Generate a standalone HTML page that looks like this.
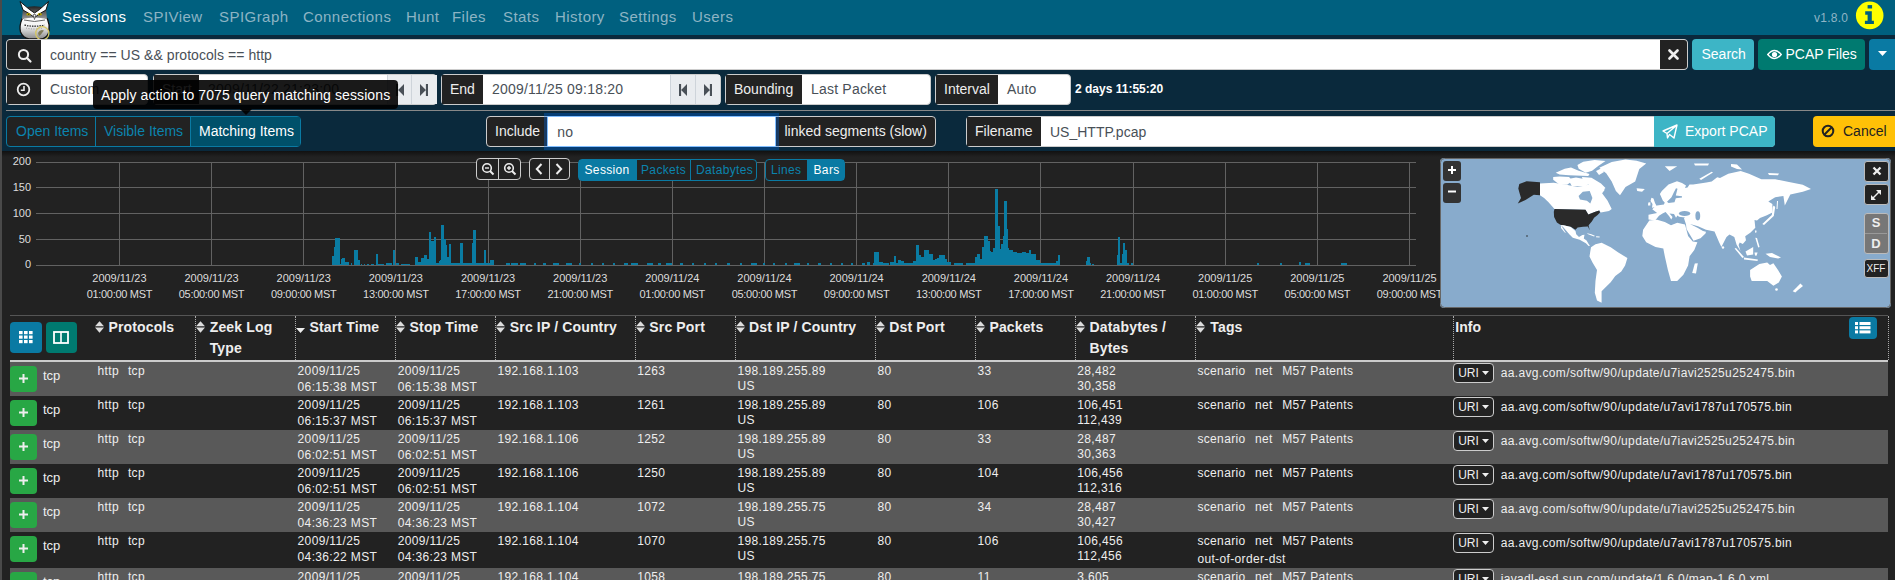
<!DOCTYPE html>
<html><head><meta charset="utf-8">
<style>
*{box-sizing:border-box}
html,body{margin:0;padding:0}
body{width:1895px;height:580px;overflow:hidden;position:relative;background:#222;font-family:"Liberation Sans",sans-serif;color:#eee}
.a{position:absolute}
.t{white-space:nowrap}
</style></head><body>
<div class="a" style="left:0px;top:0px;width:1895px;height:35px;background:#00607f;"></div>
<div class="a" style="left:0px;top:35px;width:1895px;height:116px;background:#0a293c;"></div>
<div class="a t" style="left:62px;top:9.30px;font-size:15px;line-height:15px;color:#fff;letter-spacing:0.45px;">Sessions</div>
<div class="a t" style="left:143px;top:9.30px;font-size:15px;line-height:15px;color:#8db4c4;letter-spacing:0.45px;">SPIView</div>
<div class="a t" style="left:219px;top:9.30px;font-size:15px;line-height:15px;color:#8db4c4;letter-spacing:0.45px;">SPIGraph</div>
<div class="a t" style="left:303px;top:9.30px;font-size:15px;line-height:15px;color:#8db4c4;letter-spacing:0.45px;">Connections</div>
<div class="a t" style="left:406px;top:9.30px;font-size:15px;line-height:15px;color:#8db4c4;letter-spacing:0.45px;">Hunt</div>
<div class="a t" style="left:452px;top:9.30px;font-size:15px;line-height:15px;color:#8db4c4;letter-spacing:0.45px;">Files</div>
<div class="a t" style="left:503px;top:9.30px;font-size:15px;line-height:15px;color:#8db4c4;letter-spacing:0.45px;">Stats</div>
<div class="a t" style="left:555px;top:9.30px;font-size:15px;line-height:15px;color:#8db4c4;letter-spacing:0.45px;">History</div>
<div class="a t" style="left:619px;top:9.30px;font-size:15px;line-height:15px;color:#8db4c4;letter-spacing:0.45px;">Settings</div>
<div class="a t" style="left:692px;top:9.30px;font-size:15px;line-height:15px;color:#8db4c4;letter-spacing:0.45px;">Users</div>
<div class="a t" style="left:1814px;top:11.84px;font-size:12px;line-height:12px;color:#8fb5c6;letter-spacing:0.25px;">v1.8.0</div>
<svg class="a" style="left:1855px;top:1px" width="30" height="30" viewBox="0 0 30 30"><circle cx="14.7" cy="14.4" r="13.8" fill="#ffff00"/><rect x="12.6" y="4.1" width="4.5" height="3.4" fill="#00607f"/><path d="M10.2 10.2 H16.8 V19.8 H18.9 V23.1 H9.9 V19.8 H12.6 V13.8 H10.2 Z" fill="#00607f"/></svg>
<svg class="a" style="left:14px;top:0px" width="40" height="42" viewBox="0 0 40 42">
<defs><linearGradient id="og" x1="0" y1="0" x2="0" y2="1"><stop offset="0" stop-color="#fff"/><stop offset="0.45" stop-color="#f4f4f4"/><stop offset="1" stop-color="#8a8a8a"/></linearGradient>
<linearGradient id="hg" x1="0" y1="0" x2="0" y2="1"><stop offset="0" stop-color="#222"/><stop offset="1" stop-color="#9a9a9a"/></linearGradient></defs>
<path d="M8 19 Q5 26 6.5 32 Q9 38 15 39 L28 39 Q34 37 35 31 Q36 25 33.5 19 Q30 15 20.5 15 Q11 15 8 19Z" fill="url(#og)" stroke="#111" stroke-width="1.3"/>
<path d="M9 8 Q20 4.5 32 8 L33 19 Q20.5 16 8 19Z" fill="url(#hg)"/>
<path d="M6 1.5 L15.5 9.5 L20.5 13 L25.5 9.5 L34.5 1.5 L32 10 L26 13.5 L20.5 17.5 L15 13.5 L9 10Z" fill="#fff" stroke="#111" stroke-width="1"/>
<ellipse cx="14.5" cy="14.2" rx="2" ry="1.3" fill="#b8a800"/><ellipse cx="25.8" cy="14.2" rx="2" ry="1.3" fill="#b8a800"/>
<circle cx="14.7" cy="14.2" r="0.6" fill="#111"/><circle cx="25.6" cy="14.2" r="0.6" fill="#111"/>
<path d="M19.3 14.5 L20.5 19.5 L21.7 14.5Z" fill="#fff" stroke="#333" stroke-width="0.6"/>
<path d="M10 20 Q20.5 23 31 20" fill="none" stroke="#555" stroke-width="0.9"/>
<path d="M10.5 25 Q20.5 27.5 30.5 25" fill="none" stroke="#333" stroke-width="1.3" stroke-dasharray="1.5 1"/>
<path d="M12 28 Q20.5 30 29 28" fill="none" stroke="#777" stroke-width="0.7" stroke-dasharray="1 1.5"/>
<circle cx="28.3" cy="33.3" r="6.6" fill="none" stroke="#d8c860" stroke-width="1.3"/>
<path d="M24 33 Q26 29 30 30.5 L28 33 Q27 35 25 36Z" fill="#6f6a40" opacity="0.8"/>
</svg>
<div class="a" style="left:6px;top:39px;width:1682px;height:31px;background:#fff;border:1px solid #ccc;border-radius:4px;overflow:hidden;"></div>
<div class="a" style="left:7px;top:40px;width:34px;height:29px;background:#222;border-radius:3px 0 0 3px"></div>
<svg class="a" style="left:17px;top:47.5px" width="16" height="16" viewBox="0 0 16 16"><circle cx="6.5" cy="6.5" r="4.6" fill="none" stroke="#eee" stroke-width="2"/><path d="M10 10 L13.5 13.5" stroke="#eee" stroke-width="2.2" stroke-linecap="round"/></svg>
<div class="a t" style="left:50px;top:47.95px;font-size:14px;line-height:14px;color:#495057;letter-spacing:0.05px;">country == US &amp;&amp; protocols == http</div>
<div class="a" style="left:1660px;top:40px;width:27px;height:29px;background:#222;border-radius:0 3px 3px 0"></div>
<svg class="a" style="left:1668px;top:49px" width="11" height="11" viewBox="0 0 11 11"><path d="M1.5 1.5 L9.5 9.5 M9.5 1.5 L1.5 9.5" stroke="#eee" stroke-width="2.6" stroke-linecap="round"/></svg>
<div class="a" style="left:1692px;top:39px;width:62px;height:31px;background:#3db5c6;border-radius:4px"></div>
<div class="a t" style="left:1701.5px;top:47.05px;font-size:14px;line-height:14px;color:#fff;">Search</div>
<div class="a" style="left:1758px;top:39px;width:107px;height:31px;background:#007a70;border-radius:4px"></div>
<svg class="a" style="left:1767px;top:49px" width="15" height="11" viewBox="0 0 15 11"><path d="M0.8 5.5 Q7.5 -2.5 14.2 5.5 Q7.5 13.5 0.8 5.5Z" fill="none" stroke="#fff" stroke-width="1.5"/><circle cx="7.5" cy="5.5" r="2.6" fill="#fff"/></svg>
<div class="a t" style="left:1785.5px;top:47.05px;font-size:14px;line-height:14px;color:#fff;">PCAP Files</div>
<div class="a" style="left:1869px;top:39px;width:26px;height:31px;background:#0a7aa3;border-radius:4px 0 0 4px"></div>
<svg class="a" style="left:1878px;top:51px" width="9" height="5"><path d="M0 0 L9 0 L4.5 5Z" fill="#fff"/></svg>
<div class="a" style="left:6px;top:74px;width:142px;height:31px;background:#fff;border:1px solid #ccc;border-radius:4px;overflow:hidden;"></div>
<div class="a" style="left:7px;top:75px;width:34px;height:29px;background:#222;"></div>
<div class="a t" style="left:15px;top:81.75px;font-size:14px;line-height:14px;color:#eee;"></div>
<svg class="a" style="left:16px;top:82px" width="15" height="15" viewBox="0 0 15 15"><circle cx="7.5" cy="7.5" r="5.8" fill="none" stroke="#eee" stroke-width="1.8"/><path d="M8 4 V8.3 H4.8" fill="none" stroke="#eee" stroke-width="1.6"/></svg>
<div class="a t" style="left:50px;top:82.25px;font-size:14px;line-height:14px;color:#495057;letter-spacing:0.2px;">Custom</div>
<div class="a" style="left:153px;top:74px;width:284px;height:31px;background:#fff;border:1px solid #ccc;border-radius:4px;overflow:hidden;"></div>
<div class="a" style="left:154px;top:75px;width:45px;height:29px;background:#222;"></div>
<div class="a t" style="left:162px;top:81.75px;font-size:14px;line-height:14px;color:#eee;">Start</div>
<div class="a t" style="left:208px;top:82.25px;font-size:14px;line-height:14px;color:#495057;letter-spacing:0.2px;">2009/11/22 21:23:00</div>
<div class="a" style="left:387px;top:75px;width:50px;height:29px;background:#e9ecef;"></div>
<div class="a" style="left:387px;top:75px;width:1px;height:29px;background:#ced4da;"></div>
<div class="a" style="left:411px;top:75px;width:1px;height:29px;background:#ced4da;"></div>
<div class="a" style="left:441px;top:74px;width:280px;height:31px;background:#fff;border:1px solid #ccc;border-radius:4px;overflow:hidden;"></div>
<div class="a" style="left:442px;top:75px;width:41px;height:29px;background:#222;"></div>
<div class="a t" style="left:450px;top:81.75px;font-size:14px;line-height:14px;color:#eee;">End</div>
<div class="a t" style="left:492px;top:82.25px;font-size:14px;line-height:14px;color:#495057;letter-spacing:0.2px;">2009/11/25 09:18:20</div>
<div class="a" style="left:670px;top:75px;width:50px;height:29px;background:#e9ecef;"></div>
<div class="a" style="left:670px;top:75px;width:1px;height:29px;background:#ced4da;"></div>
<div class="a" style="left:695px;top:75px;width:1px;height:29px;background:#ced4da;"></div>
<svg class="a" style="left:396px;top:84px" width="9" height="12"><path d="M0 0 H2.1 V12 H0Z M8 0 V12 L2.1 6Z" fill="#495057"/></svg>
<svg class="a" style="left:679px;top:84px" width="9" height="12"><path d="M0 0 H2.1 V12 H0Z M8 0 V12 L2.1 6Z" fill="#495057"/></svg>
<svg class="a" style="left:420px;top:84px" width="9" height="12"><path d="M5.9 0 H8 V12 H5.9Z M0 0 V12 L5.9 6Z" fill="#495057"/></svg>
<svg class="a" style="left:704px;top:84px" width="9" height="12"><path d="M5.9 0 H8 V12 H5.9Z M0 0 V12 L5.9 6Z" fill="#495057"/></svg>
<div class="a" style="left:725px;top:74px;width:206px;height:31px;background:#fff;border:1px solid #ccc;border-radius:4px;overflow:hidden;"></div>
<div class="a" style="left:726px;top:75px;width:76px;height:29px;background:#222;"></div>
<div class="a t" style="left:734px;top:81.75px;font-size:14px;line-height:14px;color:#eee;">Bounding</div>
<div class="a t" style="left:811px;top:82.25px;font-size:14px;line-height:14px;color:#495057;letter-spacing:0.2px;">Last Packet</div>
<div class="a" style="left:935px;top:74px;width:136px;height:31px;background:#fff;border:1px solid #ccc;border-radius:4px;overflow:hidden;"></div>
<div class="a" style="left:936px;top:75px;width:62px;height:29px;background:#222;"></div>
<div class="a t" style="left:944px;top:81.75px;font-size:14px;line-height:14px;color:#eee;">Interval</div>
<div class="a t" style="left:1007px;top:82.25px;font-size:14px;line-height:14px;color:#495057;letter-spacing:0.2px;">Auto</div>
<div class="a t" style="left:1075px;top:83.44px;font-size:12px;line-height:12px;color:#fff;font-weight:bold;">2 days 11:55:20</div>
<div class="a" style="left:6px;top:110px;width:1889px;height:1px;background:#888;"></div>
<div class="a" style="left:6px;top:116px;width:295px;height:31px;border:1px solid #0a7aa3;border-radius:4px;background:#222;overflow:hidden"></div>
<div class="a" style="left:190px;top:117px;width:110px;height:29px;background:#00506a;"></div>
<div class="a" style="left:95px;top:117px;width:1px;height:29px;background:#0a7aa3;"></div>
<div class="a" style="left:190px;top:117px;width:1px;height:29px;background:#0a7aa3;"></div>
<div class="a t" style="left:16px;top:124.15px;font-size:14px;line-height:14px;color:#0b84ae;">Open Items</div>
<div class="a t" style="left:104px;top:124.15px;font-size:14px;line-height:14px;color:#0b84ae;">Visible Items</div>
<div class="a t" style="left:199px;top:124.15px;font-size:14px;line-height:14px;color:#fff;">Matching Items</div>
<div class="a" style="left:486px;top:116px;width:450px;height:31px;background:#222;border:1px solid #ccc;border-radius:4px;overflow:hidden;"></div>
<div class="a t" style="left:495px;top:124.15px;font-size:14px;line-height:14px;color:#eee;">Include</div>
<div class="a" style="left:547px;top:116px;width:229px;height:31px;background:#fff;border:1px solid #80bdff;box-shadow:0 0 0 3px rgba(0,110,240,.32)"></div>
<div class="a t" style="left:557.3px;top:124.65px;font-size:14px;line-height:14px;color:#495057;letter-spacing:0.2px;">no</div>
<div class="a t" style="left:784.5px;top:124.15px;font-size:14px;line-height:14px;color:#eee;">linked segments (slow)</div>
<div class="a" style="left:966px;top:116px;width:809px;height:31px;background:#fff;border:1px solid #ccc;border-radius:4px;overflow:hidden;"></div>
<div class="a" style="left:967px;top:117px;width:74px;height:29px;background:#222;"></div>
<div class="a t" style="left:975px;top:124.15px;font-size:14px;line-height:14px;color:#eee;">Filename</div>
<div class="a t" style="left:1050px;top:124.65px;font-size:14px;line-height:14px;color:#495057;">US_HTTP.pcap</div>
<div class="a" style="left:1654px;top:116px;width:121px;height:31px;background:#3db5c6;border-radius:0 4px 4px 0"></div>
<svg class="a" style="left:1662px;top:124px" width="16" height="15" viewBox="0 0 16 15"><path d="M1 7 L15 1 L12 14 L7.5 10.5 L5.5 14 L5 9.5 Z M5 9.5 L15 1" fill="none" stroke="#fff" stroke-width="1.4" stroke-linejoin="round"/></svg>
<div class="a t" style="left:1685px;top:124.15px;font-size:14px;line-height:14px;color:#fff;">Export PCAP</div>
<div class="a" style="left:1813px;top:116px;width:82px;height:31px;background:#ffc107;border-radius:4px 0 0 4px"></div>
<svg class="a" style="left:1821px;top:124px" width="14" height="14" viewBox="0 0 14 14"><circle cx="7" cy="7" r="5.3" fill="none" stroke="#222" stroke-width="2"/><path d="M3.5 10.5 L10.5 3.5" stroke="#222" stroke-width="2"/></svg>
<div class="a t" style="left:1843px;top:124.15px;font-size:14px;line-height:14px;color:#222;">Cancel</div>
<div class="a" style="left:0;top:151px;width:1895px;height:6px;background:linear-gradient(#111,#222)"></div>
<svg class="a" style="left:0;top:0" width="1440" height="310"><rect x="36" y="162" width="1380" height="1" fill="#626262"/><rect x="36" y="187" width="1380" height="1" fill="#626262"/><rect x="36" y="213" width="1380" height="1" fill="#626262"/><rect x="36" y="239" width="1380" height="1" fill="#626262"/><rect x="36" y="265" width="1380" height="1" fill="#626262"/><rect x="119" y="162" width="1" height="103" fill="#626262"/><rect x="211" y="162" width="1" height="103" fill="#626262"/><rect x="303" y="162" width="1" height="103" fill="#626262"/><rect x="395" y="162" width="1" height="103" fill="#626262"/><rect x="488" y="162" width="1" height="103" fill="#626262"/><rect x="580" y="162" width="1" height="103" fill="#626262"/><rect x="672" y="162" width="1" height="103" fill="#626262"/><rect x="764" y="162" width="1" height="103" fill="#626262"/><rect x="856" y="162" width="1" height="103" fill="#626262"/><rect x="948" y="162" width="1" height="103" fill="#626262"/><rect x="1040" y="162" width="1" height="103" fill="#626262"/><rect x="1133" y="162" width="1" height="103" fill="#626262"/><rect x="1225" y="162" width="1" height="103" fill="#626262"/><rect x="1317" y="162" width="1" height="103" fill="#626262"/><rect x="1409" y="162" width="1" height="103" fill="#626262"/></svg>
<div class="a t" style="left:1px;width:30px;text-align:right;top:156.30px;font-size:11px;line-height:11px;color:#ddd">200</div>
<div class="a t" style="left:1px;width:30px;text-align:right;top:182.05px;font-size:11px;line-height:11px;color:#ddd">150</div>
<div class="a t" style="left:1px;width:30px;text-align:right;top:207.80px;font-size:11px;line-height:11px;color:#ddd">100</div>
<div class="a t" style="left:1px;width:30px;text-align:right;top:233.55px;font-size:11px;line-height:11px;color:#ddd">50</div>
<div class="a t" style="left:1px;width:30px;text-align:right;top:259.30px;font-size:11px;line-height:11px;color:#ddd">0</div>
<div class="a t" style="left:69.40px;width:100px;text-align:center;top:272.70px;font-size:11px;line-height:11px;color:#ddd">2009/11/23</div>
<div class="a t" style="left:69.40px;width:100px;text-align:center;top:288.70px;font-size:11px;line-height:11px;color:#ddd;letter-spacing:-0.3px">01:00:00 MST</div>
<div class="a t" style="left:161.55px;width:100px;text-align:center;top:272.70px;font-size:11px;line-height:11px;color:#ddd">2009/11/23</div>
<div class="a t" style="left:161.55px;width:100px;text-align:center;top:288.70px;font-size:11px;line-height:11px;color:#ddd;letter-spacing:-0.3px">05:00:00 MST</div>
<div class="a t" style="left:253.70px;width:100px;text-align:center;top:272.70px;font-size:11px;line-height:11px;color:#ddd">2009/11/23</div>
<div class="a t" style="left:253.70px;width:100px;text-align:center;top:288.70px;font-size:11px;line-height:11px;color:#ddd;letter-spacing:-0.3px">09:00:00 MST</div>
<div class="a t" style="left:345.85px;width:100px;text-align:center;top:272.70px;font-size:11px;line-height:11px;color:#ddd">2009/11/23</div>
<div class="a t" style="left:345.85px;width:100px;text-align:center;top:288.70px;font-size:11px;line-height:11px;color:#ddd;letter-spacing:-0.3px">13:00:00 MST</div>
<div class="a t" style="left:438.00px;width:100px;text-align:center;top:272.70px;font-size:11px;line-height:11px;color:#ddd">2009/11/23</div>
<div class="a t" style="left:438.00px;width:100px;text-align:center;top:288.70px;font-size:11px;line-height:11px;color:#ddd;letter-spacing:-0.3px">17:00:00 MST</div>
<div class="a t" style="left:530.15px;width:100px;text-align:center;top:272.70px;font-size:11px;line-height:11px;color:#ddd">2009/11/23</div>
<div class="a t" style="left:530.15px;width:100px;text-align:center;top:288.70px;font-size:11px;line-height:11px;color:#ddd;letter-spacing:-0.3px">21:00:00 MST</div>
<div class="a t" style="left:622.30px;width:100px;text-align:center;top:272.70px;font-size:11px;line-height:11px;color:#ddd">2009/11/24</div>
<div class="a t" style="left:622.30px;width:100px;text-align:center;top:288.70px;font-size:11px;line-height:11px;color:#ddd;letter-spacing:-0.3px">01:00:00 MST</div>
<div class="a t" style="left:714.45px;width:100px;text-align:center;top:272.70px;font-size:11px;line-height:11px;color:#ddd">2009/11/24</div>
<div class="a t" style="left:714.45px;width:100px;text-align:center;top:288.70px;font-size:11px;line-height:11px;color:#ddd;letter-spacing:-0.3px">05:00:00 MST</div>
<div class="a t" style="left:806.60px;width:100px;text-align:center;top:272.70px;font-size:11px;line-height:11px;color:#ddd">2009/11/24</div>
<div class="a t" style="left:806.60px;width:100px;text-align:center;top:288.70px;font-size:11px;line-height:11px;color:#ddd;letter-spacing:-0.3px">09:00:00 MST</div>
<div class="a t" style="left:898.75px;width:100px;text-align:center;top:272.70px;font-size:11px;line-height:11px;color:#ddd">2009/11/24</div>
<div class="a t" style="left:898.75px;width:100px;text-align:center;top:288.70px;font-size:11px;line-height:11px;color:#ddd;letter-spacing:-0.3px">13:00:00 MST</div>
<div class="a t" style="left:990.90px;width:100px;text-align:center;top:272.70px;font-size:11px;line-height:11px;color:#ddd">2009/11/24</div>
<div class="a t" style="left:990.90px;width:100px;text-align:center;top:288.70px;font-size:11px;line-height:11px;color:#ddd;letter-spacing:-0.3px">17:00:00 MST</div>
<div class="a t" style="left:1083.05px;width:100px;text-align:center;top:272.70px;font-size:11px;line-height:11px;color:#ddd">2009/11/24</div>
<div class="a t" style="left:1083.05px;width:100px;text-align:center;top:288.70px;font-size:11px;line-height:11px;color:#ddd;letter-spacing:-0.3px">21:00:00 MST</div>
<div class="a t" style="left:1175.20px;width:100px;text-align:center;top:272.70px;font-size:11px;line-height:11px;color:#ddd">2009/11/25</div>
<div class="a t" style="left:1175.20px;width:100px;text-align:center;top:288.70px;font-size:11px;line-height:11px;color:#ddd;letter-spacing:-0.3px">01:00:00 MST</div>
<div class="a t" style="left:1267.35px;width:100px;text-align:center;top:272.70px;font-size:11px;line-height:11px;color:#ddd">2009/11/25</div>
<div class="a t" style="left:1267.35px;width:100px;text-align:center;top:288.70px;font-size:11px;line-height:11px;color:#ddd;letter-spacing:-0.3px">05:00:00 MST</div>
<div class="a t" style="left:1359.50px;width:100px;text-align:center;top:272.70px;font-size:11px;line-height:11px;color:#ddd">2009/11/25</div>
<div class="a t" style="left:1359.50px;width:100px;text-align:center;top:288.70px;font-size:11px;line-height:11px;color:#ddd;letter-spacing:-0.3px">09:00:00 MST</div>
<svg class="a" style="left:0;top:0" width="1440" height="310"><g fill="#0a7ca3" shape-rendering="crispEdges"><rect x="331.7" y="255.8" width="2.0" height="9.2"/><rect x="333.7" y="247.0" width="1.3" height="18.0"/><rect x="335.0" y="237.6" width="4.8" height="27.4"/><rect x="339.8" y="264.0" width="1.2" height="1.0"/><rect x="341.0" y="258.7" width="1.4" height="6.3"/><rect x="342.4" y="258.0" width="2.6" height="7.0"/><rect x="345.0" y="262.0" width="3.5" height="3.0"/><rect x="351.0" y="263.0" width="1.0" height="2.0"/><rect x="354.0" y="250.2" width="4.0" height="14.8"/><rect x="358.0" y="260.0" width="2.0" height="5.0"/><rect x="361.0" y="263.5" width="0.5" height="1.5"/><rect x="364.0" y="263.5" width="1.0" height="1.5"/><rect x="367.0" y="263.5" width="2.0" height="1.5"/><rect x="371.0" y="263.5" width="3.0" height="1.5"/><rect x="375.6" y="254.0" width="2.4" height="11.0"/><rect x="378.0" y="263.5" width="6.0" height="1.5"/><rect x="386.0" y="263.2" width="6.0" height="1.8"/><rect x="393.2" y="250.0" width="2.1" height="15.0"/><rect x="396.0" y="263.0" width="3.0" height="2.0"/><rect x="401.0" y="263.5" width="9.0" height="1.5"/><rect x="415.0" y="257.0" width="2.8" height="8.0"/><rect x="418.0" y="262.0" width="2.5" height="3.0"/><rect x="420.5" y="258.0" width="3.2" height="7.0"/><rect x="423.7" y="255.0" width="2.8" height="10.0"/><rect x="426.5" y="259.0" width="2.0" height="6.0"/><rect x="428.5" y="232.4" width="2.4" height="32.6"/><rect x="430.9" y="240.6" width="2.6" height="24.4"/><rect x="433.5" y="250.0" width="0.5" height="15.0"/><rect x="434.0" y="237.0" width="2.3" height="28.0"/><rect x="436.3" y="263.0" width="2.2" height="2.0"/><rect x="438.5" y="261.0" width="1.5" height="4.0"/><rect x="440.0" y="260.0" width="1.0" height="5.0"/><rect x="441.0" y="225.0" width="2.8" height="40.0"/><rect x="443.8" y="239.0" width="1.7" height="26.0"/><rect x="445.5" y="245.0" width="1.0" height="20.0"/><rect x="446.5" y="257.0" width="2.0" height="8.0"/><rect x="448.5" y="244.0" width="2.8" height="21.0"/><rect x="451.3" y="262.5" width="8.7" height="2.5"/><rect x="460.0" y="243.0" width="3.0" height="22.0"/><rect x="463.0" y="263.0" width="9.0" height="2.0"/><rect x="472.0" y="243.0" width="1.0" height="22.0"/><rect x="473.0" y="230.0" width="2.8" height="35.0"/><rect x="475.8" y="263.0" width="7.7" height="2.0"/><rect x="483.5" y="250.0" width="2.5" height="15.0"/><rect x="486.0" y="262.5" width="4.0" height="2.5"/><rect x="490.0" y="260.0" width="4.0" height="5.0"/><rect x="506.0" y="262.5" width="4.0" height="2.5"/><rect x="511.0" y="263.0" width="7.0" height="2.0"/><rect x="862.0" y="263.0" width="3.0" height="2.0"/><rect x="867.0" y="262.0" width="2.5" height="3.0"/><rect x="873.0" y="262.5" width="1.5" height="2.5"/><rect x="874.0" y="252.0" width="4.6" height="13.0"/><rect x="878.6" y="262.0" width="4.4" height="3.0"/><rect x="883.0" y="263.0" width="6.0" height="2.0"/><rect x="890.0" y="262.0" width="3.7" height="3.0"/><rect x="893.7" y="255.5" width="2.3" height="9.5"/><rect x="896.0" y="263.0" width="2.0" height="2.0"/><rect x="898.0" y="260.0" width="3.0" height="5.0"/><rect x="901.0" y="261.0" width="3.0" height="4.0"/><rect x="904.0" y="263.0" width="9.0" height="2.0"/><rect x="913.0" y="261.0" width="2.5" height="4.0"/><rect x="915.5" y="245.0" width="3.5" height="20.0"/><rect x="919.0" y="255.0" width="2.0" height="10.0"/><rect x="921.0" y="257.0" width="3.0" height="8.0"/><rect x="924.0" y="250.0" width="5.0" height="15.0"/><rect x="929.0" y="254.0" width="4.0" height="11.0"/><rect x="933.0" y="260.0" width="2.0" height="5.0"/><rect x="935.0" y="259.0" width="2.0" height="6.0"/><rect x="937.0" y="258.0" width="2.0" height="7.0"/><rect x="939.0" y="254.5" width="6.0" height="10.5"/><rect x="945.0" y="259.0" width="2.0" height="6.0"/><rect x="947.0" y="262.0" width="4.0" height="3.0"/><rect x="954.0" y="263.0" width="9.0" height="2.0"/><rect x="966.0" y="262.5" width="9.0" height="2.5"/><rect x="975.0" y="256.6" width="2.0" height="8.4"/><rect x="977.0" y="254.4" width="3.0" height="10.6"/><rect x="980.0" y="259.0" width="2.0" height="6.0"/><rect x="982.0" y="247.0" width="2.0" height="18.0"/><rect x="984.0" y="236.0" width="4.0" height="29.0"/><rect x="988.0" y="241.0" width="1.5" height="24.0"/><rect x="989.5" y="251.0" width="1.5" height="14.0"/><rect x="991.0" y="252.0" width="2.0" height="13.0"/><rect x="993.0" y="248.0" width="2.0" height="17.0"/><rect x="995.0" y="189.0" width="2.5" height="76.0"/><rect x="997.5" y="226.0" width="2.5" height="39.0"/><rect x="1000.0" y="249.0" width="1.0" height="16.0"/><rect x="1001.0" y="244.0" width="2.0" height="21.0"/><rect x="1003.0" y="236.0" width="1.0" height="29.0"/><rect x="1004.0" y="201.0" width="2.5" height="64.0"/><rect x="1006.5" y="229.0" width="1.5" height="36.0"/><rect x="1008.0" y="248.0" width="1.0" height="17.0"/><rect x="1009.0" y="250.0" width="4.0" height="15.0"/><rect x="1013.0" y="252.0" width="4.0" height="13.0"/><rect x="1017.0" y="253.0" width="5.0" height="12.0"/><rect x="1022.0" y="252.0" width="4.0" height="13.0"/><rect x="1026.0" y="253.0" width="3.0" height="12.0"/><rect x="1029.0" y="250.0" width="2.0" height="15.0"/><rect x="1031.0" y="254.0" width="5.0" height="11.0"/><rect x="1036.0" y="260.0" width="4.0" height="5.0"/><rect x="1040.0" y="262.5" width="16.0" height="2.5"/><rect x="1056.0" y="261.0" width="1.5" height="4.0"/><rect x="1057.5" y="255.0" width="2.5" height="10.0"/><rect x="1086.0" y="261.0" width="1.0" height="4.0"/><rect x="1087.0" y="257.0" width="2.5" height="8.0"/><rect x="1089.5" y="263.0" width="1.5" height="2.0"/><rect x="1092.0" y="263.5" width="2.0" height="1.5"/><rect x="1117.0" y="255.0" width="1.0" height="10.0"/><rect x="1118.0" y="237.0" width="2.0" height="28.0"/><rect x="1120.0" y="263.0" width="2.0" height="2.0"/><rect x="1122.0" y="254.0" width="1.0" height="11.0"/><rect x="1123.0" y="243.0" width="2.0" height="22.0"/><rect x="1125.0" y="250.0" width="2.0" height="15.0"/><rect x="1127.0" y="263.0" width="2.0" height="2.0"/><rect x="1131.0" y="263.0" width="2.0" height="2.0"/><rect x="1257.0" y="263.0" width="2.0" height="2.0"/><rect x="1280.0" y="263.0" width="2.0" height="2.0"/><rect x="1299.0" y="262.0" width="2.0" height="3.0"/><rect x="1305.0" y="263.0" width="5.0" height="2.0"/><rect x="1341.0" y="263.0" width="6.0" height="2.0"/><rect x="520.0" y="263.0" width="6.0" height="2.0"/><rect x="534.0" y="263.0" width="2.0" height="2.0"/><rect x="543.0" y="263.0" width="3.0" height="2.0"/><rect x="553.0" y="263.0" width="6.0" height="2.0"/><rect x="566.0" y="263.0" width="6.0" height="2.0"/><rect x="579.0" y="263.0" width="2.0" height="2.0"/><rect x="591.0" y="263.0" width="2.0" height="2.0"/><rect x="602.0" y="263.0" width="2.0" height="2.0"/><rect x="613.0" y="263.0" width="2.0" height="2.0"/><rect x="624.0" y="263.0" width="4.0" height="2.0"/><rect x="631.0" y="263.0" width="7.0" height="2.0"/><rect x="647.0" y="263.0" width="6.0" height="2.0"/><rect x="658.0" y="263.0" width="3.0" height="2.0"/><rect x="666.0" y="263.0" width="6.0" height="2.0"/><rect x="680.0" y="263.0" width="3.0" height="2.0"/><rect x="692.0" y="263.0" width="2.0" height="2.0"/><rect x="704.0" y="263.0" width="2.0" height="2.0"/><rect x="715.0" y="263.0" width="2.0" height="2.0"/><rect x="727.0" y="263.0" width="3.0" height="2.0"/><rect x="740.0" y="263.0" width="2.0" height="2.0"/><rect x="751.0" y="263.0" width="6.0" height="2.0"/><rect x="763.0" y="263.0" width="2.0" height="2.0"/><rect x="773.0" y="263.0" width="2.0" height="2.0"/><rect x="785.0" y="263.0" width="2.0" height="2.0"/><rect x="794.0" y="263.0" width="6.0" height="2.0"/><rect x="807.0" y="263.0" width="2.0" height="2.0"/><rect x="818.0" y="263.0" width="3.0" height="2.0"/><rect x="830.0" y="263.0" width="2.0" height="2.0"/><rect x="841.0" y="263.0" width="2.0" height="2.0"/><rect x="851.0" y="263.0" width="2.0" height="2.0"/></g></svg>
<div class="a" style="left:476px;top:158px;width:45px;height:22px;border:1px solid #ccc;border-radius:4px;background:#222"></div>
<div class="a" style="left:498px;top:159px;width:1px;height:20px;background:#ccc;"></div>
<svg class="a" style="left:481px;top:162px" width="14" height="14" viewBox="0 0 14 14"><circle cx="6" cy="6" r="4.3" fill="none" stroke="#eee" stroke-width="1.6"/><path d="M9 9 L12.5 12.5" stroke="#eee" stroke-width="2"/><path d="M4 6 H8" stroke="#eee" stroke-width="1.4"/></svg>
<svg class="a" style="left:503px;top:162px" width="14" height="14" viewBox="0 0 14 14"><circle cx="6" cy="6" r="4.3" fill="none" stroke="#eee" stroke-width="1.6"/><path d="M9 9 L12.5 12.5" stroke="#eee" stroke-width="2"/><path d="M4 6 H8 M6 4 V8" stroke="#eee" stroke-width="1.4"/></svg>
<div class="a" style="left:529px;top:158px;width:41px;height:22px;border:1px solid #ccc;border-radius:4px;background:#222"></div>
<div class="a" style="left:549px;top:159px;width:1px;height:20px;background:#ccc;"></div>
<svg class="a" style="left:535px;top:163px" width="8" height="12"><path d="M6.5 1 L1.8 6 L6.5 11" fill="none" stroke="#eee" stroke-width="2"/></svg>
<svg class="a" style="left:555px;top:163px" width="8" height="12"><path d="M1.5 1 L6.2 6 L1.5 11" fill="none" stroke="#eee" stroke-width="2"/></svg>
<div class="a" style="left:578px;top:159px;width:179px;height:22px;border:1px solid #0a7aa3;border-radius:4px;background:#222"></div>
<div class="a" style="left:636px;top:160px;width:1px;height:20px;background:#0a7aa3;"></div>
<div class="a" style="left:690px;top:160px;width:1px;height:20px;background:#0a7aa3;"></div>
<div class="a" style="left:579px;top:160px;width:57px;height:20px;background:#0a7aa3;"></div>
<div class="a t" style="left:584.5px;top:164.34px;font-size:12px;line-height:12px;color:#fff;letter-spacing:0.35px;">Session</div>
<div class="a t" style="left:641px;top:164.34px;font-size:12px;line-height:12px;color:#0b84ae;letter-spacing:0.35px;">Packets</div>
<div class="a t" style="left:696px;top:164.34px;font-size:12px;line-height:12px;color:#0b84ae;letter-spacing:0.35px;">Databytes</div>
<div class="a" style="left:765px;top:159px;width:80px;height:22px;border:1px solid #0a7aa3;border-radius:4px;background:#222"></div>
<div class="a" style="left:807px;top:160px;width:1px;height:20px;background:#0a7aa3;"></div>
<div class="a" style="left:807px;top:160px;width:37px;height:20px;background:#0a7aa3;"></div>
<div class="a t" style="left:771px;top:164.34px;font-size:12px;line-height:12px;color:#0b84ae;letter-spacing:0.35px;">Lines</div>
<div class="a t" style="left:813.5px;top:164.34px;font-size:12px;line-height:12px;color:#fff;letter-spacing:0.35px;">Bars</div>
<svg class="a" style="left:1440px;top:158px" width="451" height="150" viewBox="0 0 451 150"><defs><clipPath id="mc"><rect x="0" y="0" width="451" height="150" rx="4"/></clipPath></defs><g clip-path="url(#mc)"><rect width="451" height="150" fill="#88abcc"/><path d="M100.0 25.5 L113.8 24.8 L127.6 26.9 L137.2 29.0 L145.5 27.6 L152.4 24.8 L160.7 28.3 L164.8 31.7 L162.1 35.2 L167.6 42.8 L171.7 51.0 L169.0 53.1 L160.7 54.5 L159.3 52.4 L155.2 53.8 L148.3 56.6 L145.5 51.7 L114.5 51.0 L108.3 44.1 L104.1 40.0 L100.0 37.2Z" fill="#fff"/><path d="M138.6 37.9 L142.8 33.8 L149.7 33.1 L152.4 40.0 L150.3 45.5 L146.9 42.8 L140.0 41.4Z" fill="#88abcc"/><path d="M137.4 7.0 L143.2 3.8 L154.6 1.9 L165.5 2.9 L158.5 7.7 L152.1 12.8 L145.7 14.7 L138.7 10.8Z" fill="#fff"/><path d="M115.7 14.7 L124.7 10.8 L131.0 9.6 L138.7 12.8 L149.5 16.0 L148.3 17.9 L129.1 17.2 L119.6 16.6Z" fill="#fff"/><path d="M113.2 19.1 L119.6 18.5 L129.1 19.1 L132.3 23.0 L127.2 26.8 L119.6 26.8 L113.2 21.7Z" fill="#fff"/><path d="M141.9 19.1 L151.5 19.8 L161.0 25.5 L165.5 30.0 L161.0 33.8 L154.6 28.7 L147.0 25.5 L143.2 23.0Z" fill="#fff"/><path d="M128.0 21.0 L136.0 19.5 L144.0 21.0 L150.0 25.0 L146.0 28.0 L132.0 28.5Z" fill="#fff"/><path d="M156.0 13.0 L162.0 10.0 L164.0 14.0 L159.0 17.0Z" fill="#fff"/><path d="M159.3 9.7 L171.7 4.1 L185.5 1.4 L196.6 2.8 L206.2 5.5 L199.3 11.0 L195.2 23.4 L185.5 29.0 L180.0 37.2 L175.9 33.1 L171.7 23.4 L166.2 15.2Z" fill="#fff"/><path d="M196.6 30.3 L204.8 31.0 L202.1 33.8 L197.2 33.1Z" fill="#fff"/><path d="M211.4 39.8 L213.5 40.5 L215.0 45.0 L217.1 48.8 L212.0 49.8 L212.5 46.0 L210.5 43.0Z" fill="#fff"/><path d="M208.3 44.5 L210.4 44.2 L210.4 47.4 L208.0 47.6Z" fill="#fff"/><path d="M114.5 51.0 L145.5 51.7 L148.3 56.6 L155.2 53.8 L159.3 52.4 L160.0 54.5 L157.6 57.0 L154.1 59.8 L152.0 63.2 L148.6 67.3 L149.7 72.5 L148.0 68.4 L143.1 68.7 L137.6 69.4 L135.5 71.8 L130.7 68.7 L120.3 66.7 L116.9 64.6 L114.1 59.1 L113.8 53.8Z" fill="#2a2a2a"/><path d="M79.3 25.9 L86.6 23.3 L100.0 24.3 L100.0 37.3 L93.8 36.7 L85.5 41.9 L77.8 45.5 L81.0 40.0 L79.3 34.2 L78.3 30.5Z" fill="#2a2a2a"/><circle cx="87.0" cy="78.0" r="0.8" fill="#2a2a2a"/><path d="M120.3 67.0 L123.8 67.3 L130.7 69.1 L135.5 72.9 L136.2 76.3 L139.0 79.1 L142.4 77.0 L144.5 76.7 L143.8 80.4 L146.6 82.5 L148.6 86.0 L150.0 87.7 L148.6 88.0 L145.9 85.3 L139.7 81.8 L132.8 79.8 L129.3 76.3 L125.9 72.2 L123.1 69.1Z" fill="#fff"/><path d="M121.0 67.3 L122.4 69.4 L125.9 75.0 L124.8 74.6 L121.0 70.1Z" fill="#fff"/><path d="M147.2 75.3 L151.4 76.3 L154.8 77.7 L154.1 78.4 L150.7 77.3 L147.6 76.0Z" fill="#fff"/><path d="M156.2 78.2 L159.7 78.6 L159.5 79.5 L156.0 79.3Z" fill="#fff"/><path d="M151.0 89.3 L155.5 86.3 L161.6 84.8 L170.7 89.3 L178.3 94.6 L187.4 99.9 L185.1 107.5 L181.3 113.6 L175.3 118.1 L170.7 124.2 L166.1 128.8 L161.6 133.3 L161.6 144.7 L157.0 142.4 L154.8 134.8 L155.5 122.7 L157.0 112.1 L152.5 104.5 L149.5 98.4 L150.2 93.9Z" fill="#fff"/><path d="M208.5 56.8 L208.5 61.6 L215.2 62.5 L219.0 57.8 L222.5 55.5 L225.6 54.0 L229.0 58.0 L231.3 61.6 L232.5 59.0 L229.5 55.5 L234.0 56.0 L236.0 59.7 L237.5 57.5 L239.0 58.8 L245.0 59.5 L244.0 60.3 L246.0 66.4 L246.5 71.0 L253.5 82.7 L260.5 80.3 L265.5 75.5 L266.0 73.8 L263.0 73.0 L257.0 69.5 L250.0 66.0 L258.0 68.3 L266.0 71.8 L274.5 73.4 L279.1 84.2 L281.4 88.9 L286.5 79.0 L289.5 76.5 L294.3 79.1 L296.6 86.8 L300.5 93.0 L298.6 87.0 L299.7 84.5 L302.8 86.0 L306.0 82.2 L305.2 78.3 L310.6 74.4 L315.3 69.8 L314.5 62.0 L317.0 62.5 L320.0 59.9 L326.9 57.2 L332.4 54.4 L332.4 46.1 L328.3 43.4 L335.2 39.2 L343.4 37.9 L344.8 47.5 L350.3 36.5 L362.8 33.7 L371.0 31.0 L362.8 26.8 L349.0 24.1 L335.2 21.3 L321.4 21.3 L309.0 15.8 L300.7 13.0 L288.3 15.8 L280.0 19.9 L277.2 19.3 L271.7 23.4 L266.4 24.6 L253.1 26.5 L249.5 26.5 L247.5 29.5 L245.0 30.0 L246.0 27.5 L242.0 25.0 L237.0 23.2 L228.5 26.5 L221.8 33.1 L219.9 36.0 L222.8 42.6 L224.7 44.5 L224.0 46.5 L217.0 47.5 L214.2 49.3 L212.3 51.2 L217.1 55.0Z" fill="#fff"/><path d="M236.0 30.3 L237.5 30.8 L235.8 37.5 L242.0 38.2 L242.0 39.5 L235.8 40.3 L234.5 44.3 L228.5 45.0 L227.0 43.8 L231.5 39.3 L234.0 34.0Z" fill="#88abcc"/><ellipse cx="244.6" cy="55.4" rx="5.7" ry="2.5" fill="#88abcc"/><ellipse cx="257.8" cy="57.8" rx="2.4" ry="4.6" fill="#88abcc"/><path d="M259.3 20.7 L271.7 13.8 L273.0 14.5 L261.0 22.0Z" fill="#fff"/><path d="M224.8 8.3 L237.2 8.3 L229.6 13.1Z" fill="#fff"/><path d="M254.0 5.5 L269.0 5.5 L268.0 7.5 L255.0 7.5Z" fill="#fff"/><path d="M291.0 6.0 L297.0 6.5 L302.0 11.5 L297.0 11.0 L291.0 8.5Z" fill="#fff"/><path d="M328.0 15.0 L339.0 15.5 L338.0 17.2 L329.0 17.0Z" fill="#fff"/><path d="M333.8 47.5 L335.2 49.0 L333.8 58.0 L324.0 67.0 L322.3 66.0 L331.8 57.0 L332.8 49.0Z" fill="#fff"/><path d="M337.0 43.0 L338.0 43.0 L337.5 51.0 L336.5 51.0Z" fill="#fff"/><path d="M209.3 62.5 L217.1 61.7 L224.8 64.1 L231.0 67.2 L237.2 64.8 L245.0 66.4 L248.1 78.0 L252.7 83.5 L257.4 84.2 L254.3 92.0 L249.6 98.2 L248.1 107.5 L243.4 116.8 L237.2 123.0 L231.0 123.0 L227.9 112.1 L224.8 98.2 L223.3 90.4 L215.5 88.9 L206.2 84.2 L202.3 78.0 L203.1 71.8Z" fill="#fff"/><path d="M254.8 105.5 L257.8 105.3 L256.0 115.5 L252.2 115.0Z" fill="#fff"/><circle cx="283.0" cy="89.5" r="1.2" fill="#fff"/><path d="M294.6 90.4 L296.0 90.0 L304.0 99.0 L302.4 100.0Z" fill="#fff"/><path d="M303.9 99.5 L317.9 101.5 L317.5 103.0 L304.0 101.5Z" fill="#fff"/><path d="M305.5 93.5 L313.2 88.9 L313.2 96.6 L307.0 97.4Z" fill="#fff"/><path d="M315.3 79.8 L317.0 80.0 L319.6 89.0 L318.2 89.5Z" fill="#fff"/><path d="M314.5 94.6 L317.6 94.6 L316.5 97.7 L315.0 97.5Z" fill="#fff"/><path d="M325.5 95.7 L332.0 95.0 L341.0 99.6 L338.0 100.5 L330.0 99.0Z" fill="#fff"/><ellipse cx="315.8" cy="73.6" rx="0.7" ry="1.3" fill="#fff"/><path d="M310.1 112.1 L319.4 106.0 L327.2 104.4 L330.0 107.0 L333.4 105.2 L338.0 112.1 L341.9 118.4 L338.8 124.6 L333.4 127.7 L327.2 123.0 L317.9 123.0 L311.7 123.0 L310.1 118.4Z" fill="#fff"/><circle cx="336.5" cy="131.5" r="1.3" fill="#fff"/><path d="M360.4 125.4 L363.0 128.0 L358.0 132.0 L355.3 134.5 L352.7 133.2 L357.0 129.0Z" fill="#fff"/></g><rect x="0.5" y="0.5" width="450" height="149" rx="4" fill="none" stroke="#666" stroke-width="1"/></svg><div class="a" style="left:1443px;top:161px;width:18px;height:20px;background:#333;border-radius:3px"></div><svg class="a" style="left:1447px;top:165px" width="10" height="10"><path d="M5 1 V9 M1 5 H9" stroke="#fff" stroke-width="2"/></svg><div class="a" style="left:1443px;top:183px;width:18px;height:20px;background:#333;border-radius:3px"></div><svg class="a" style="left:1447px;top:187px" width="10" height="10"><path d="M1 4.5 H9" stroke="#fff" stroke-width="2"/></svg><div class="a" style="left:1864px;top:161px;width:25px;height:21px;background:#222;border-radius:3px;border:1px solid #bbb"></div><svg class="a" style="left:1872px;top:166px" width="10" height="10"><path d="M1.5 1.5 L8.5 8.5 M8.5 1.5 L1.5 8.5" stroke="#eee" stroke-width="2.3"/></svg><div class="a" style="left:1864px;top:184px;width:25px;height:21px;background:#222;border-radius:3px;border:1px solid #bbb"></div><svg class="a" style="left:1870px;top:189px" width="12" height="12"><path d="M2.5 9.5 L9.5 2.5" stroke="#eee" stroke-width="1.4"/><path d="M6 1 H11 V6Z M1 6 V11 H6Z" fill="#eee"/></svg><div class="a" style="left:1864px;top:213px;width:25px;height:41px;background:#777;border-radius:3px;border:1px solid #bbb"></div><div class="a" style="left:1865px;top:233px;width:22px;height:1px;background:#999"></div><div class="a t" style="left:1864px;width:24px;text-align:center;top:216px;font-size:13px;line-height:13px;font-weight:bold;color:#eee">S</div><div class="a t" style="left:1864px;width:24px;text-align:center;top:237px;font-size:13px;line-height:13px;font-weight:bold;color:#eee">D</div><div class="a" style="left:1864px;top:259px;width:25px;height:19px;background:#222;border-radius:3px;border:1px solid #bbb"></div><div class="a t" style="left:1864px;width:24px;text-align:center;top:263.5px;font-size:10px;line-height:10px;color:#eee">XFF</div>
<div class="a" style="left:10px;top:315px;width:1878px;height:1px;background:#555;"></div>
<div class="a" style="left:195.0px;top:316px;width:0;height:44px;border-left:1px dotted #aaa"></div>
<div class="a" style="left:295.0px;top:316px;width:0;height:44px;border-left:1px dotted #aaa"></div>
<div class="a" style="left:395.0px;top:316px;width:0;height:44px;border-left:1px dotted #aaa"></div>
<div class="a" style="left:495.0px;top:316px;width:0;height:44px;border-left:1px dotted #aaa"></div>
<div class="a" style="left:635.0px;top:316px;width:0;height:44px;border-left:1px dotted #aaa"></div>
<div class="a" style="left:735.0px;top:316px;width:0;height:44px;border-left:1px dotted #aaa"></div>
<div class="a" style="left:875.0px;top:316px;width:0;height:44px;border-left:1px dotted #aaa"></div>
<div class="a" style="left:975.0px;top:316px;width:0;height:44px;border-left:1px dotted #aaa"></div>
<div class="a" style="left:1075.0px;top:316px;width:0;height:44px;border-left:1px dotted #aaa"></div>
<div class="a" style="left:1195.0px;top:316px;width:0;height:44px;border-left:1px dotted #aaa"></div>
<div class="a" style="left:1453.0px;top:316px;width:0;height:44px;border-left:1px dotted #aaa"></div>
<div class="a" style="left:1888.0px;top:316px;width:0;height:44px;border-left:1px dotted #aaa"></div>
<div class="a" style="left:10px;top:360px;width:1878px;height:2px;background:#ccc;"></div>
<div class="a" style="left:10px;top:322px;width:32px;height:31px;background:#0a7aa3;border-radius:4px"></div>
<svg class="a" style="left:19px;top:331px" width="14" height="13"><rect x="0" y="0.0" width="3.6" height="3.2" fill="#fff"/><rect x="5" y="0.0" width="3.6" height="3.2" fill="#fff"/><rect x="10" y="0.0" width="3.6" height="3.2" fill="#fff"/><rect x="0" y="4.5" width="3.6" height="3.2" fill="#fff"/><rect x="5" y="4.5" width="3.6" height="3.2" fill="#fff"/><rect x="10" y="4.5" width="3.6" height="3.2" fill="#fff"/><rect x="0" y="9.0" width="3.6" height="3.2" fill="#fff"/><rect x="5" y="9.0" width="3.6" height="3.2" fill="#fff"/><rect x="10" y="9.0" width="3.6" height="3.2" fill="#fff"/></svg>
<div class="a" style="left:46px;top:322px;width:31px;height:31px;background:#007a70;border-radius:4px"></div>
<svg class="a" style="left:53px;top:331px" width="16" height="13"><rect x="1" y="1" width="14" height="11" fill="none" stroke="#fff" stroke-width="1.8"/><rect x="7.2" y="1" width="1.6" height="11" fill="#fff"/></svg>
<div class="a" style="left:1849px;top:317px;width:28px;height:22px;background:#0a7aa3;border-radius:4px"></div>
<svg class="a" style="left:1855px;top:322px" width="16" height="12"><rect x="0" y="0.0" width="3" height="3" fill="#fff"/><rect x="4.5" y="0.0" width="11" height="3" fill="#fff"/><rect x="0" y="4.2" width="3" height="3" fill="#fff"/><rect x="4.5" y="4.2" width="11" height="3" fill="#fff"/><rect x="0" y="8.4" width="3" height="3" fill="#fff"/><rect x="4.5" y="8.4" width="11" height="3" fill="#fff"/></svg>
<svg class="a" style="left:94.7px;top:321px" width="10" height="13"><path d="M0 5.3 H9 L4.5 0.3Z M0 6.6 H9 L4.5 11.7Z" fill="#ddd"/></svg>
<div class="a t" style="left:108.4px;top:320.35px;font-size:14px;line-height:14px;color:#eee;font-weight:bold;letter-spacing:0.15px;">Protocols</div>
<svg class="a" style="left:196px;top:321px" width="10" height="13"><path d="M0 5.3 H9 L4.5 0.3Z M0 6.6 H9 L4.5 11.7Z" fill="#ddd"/></svg>
<div class="a t" style="left:209.7px;top:320.35px;font-size:14px;line-height:14px;color:#eee;font-weight:bold;letter-spacing:0.15px;">Zeek Log</div>
<div class="a t" style="left:209.7px;top:341.35px;font-size:14px;line-height:14px;color:#eee;font-weight:bold;letter-spacing:0.15px;">Type</div>
<svg class="a" style="left:296px;top:321px" width="10" height="13"><path d="M0 6.9 H9 L4.5 11.9Z" fill="#eee"/></svg>
<div class="a t" style="left:309.5px;top:320.35px;font-size:14px;line-height:14px;color:#eee;font-weight:bold;letter-spacing:0.15px;">Start Time</div>
<svg class="a" style="left:396px;top:321px" width="10" height="13"><path d="M0 5.3 H9 L4.5 0.3Z M0 6.6 H9 L4.5 11.7Z" fill="#ddd"/></svg>
<div class="a t" style="left:409.6px;top:320.35px;font-size:14px;line-height:14px;color:#eee;font-weight:bold;letter-spacing:0.15px;">Stop Time</div>
<svg class="a" style="left:496px;top:321px" width="10" height="13"><path d="M0 5.3 H9 L4.5 0.3Z M0 6.6 H9 L4.5 11.7Z" fill="#ddd"/></svg>
<div class="a t" style="left:509.8px;top:320.35px;font-size:14px;line-height:14px;color:#eee;font-weight:bold;letter-spacing:0.15px;">Src IP / Country</div>
<svg class="a" style="left:636px;top:321px" width="10" height="13"><path d="M0 5.3 H9 L4.5 0.3Z M0 6.6 H9 L4.5 11.7Z" fill="#ddd"/></svg>
<div class="a t" style="left:649.3px;top:320.35px;font-size:14px;line-height:14px;color:#eee;font-weight:bold;letter-spacing:0.15px;">Src Port</div>
<svg class="a" style="left:736px;top:321px" width="10" height="13"><path d="M0 5.3 H9 L4.5 0.3Z M0 6.6 H9 L4.5 11.7Z" fill="#ddd"/></svg>
<div class="a t" style="left:749.1px;top:320.35px;font-size:14px;line-height:14px;color:#eee;font-weight:bold;letter-spacing:0.15px;">Dst IP / Country</div>
<svg class="a" style="left:876px;top:321px" width="10" height="13"><path d="M0 5.3 H9 L4.5 0.3Z M0 6.6 H9 L4.5 11.7Z" fill="#ddd"/></svg>
<div class="a t" style="left:889.2px;top:320.35px;font-size:14px;line-height:14px;color:#eee;font-weight:bold;letter-spacing:0.15px;">Dst Port</div>
<svg class="a" style="left:976px;top:321px" width="10" height="13"><path d="M0 5.3 H9 L4.5 0.3Z M0 6.6 H9 L4.5 11.7Z" fill="#ddd"/></svg>
<div class="a t" style="left:989.4px;top:320.35px;font-size:14px;line-height:14px;color:#eee;font-weight:bold;letter-spacing:0.15px;">Packets</div>
<svg class="a" style="left:1076px;top:321px" width="10" height="13"><path d="M0 5.3 H9 L4.5 0.3Z M0 6.6 H9 L4.5 11.7Z" fill="#ddd"/></svg>
<div class="a t" style="left:1089.6px;top:320.35px;font-size:14px;line-height:14px;color:#eee;font-weight:bold;letter-spacing:0.15px;">Databytes /</div>
<div class="a t" style="left:1089.6px;top:341.35px;font-size:14px;line-height:14px;color:#eee;font-weight:bold;letter-spacing:0.15px;">Bytes</div>
<svg class="a" style="left:1196px;top:321px" width="10" height="13"><path d="M0 5.3 H9 L4.5 0.3Z M0 6.6 H9 L4.5 11.7Z" fill="#ddd"/></svg>
<div class="a t" style="left:1210.3px;top:320.35px;font-size:14px;line-height:14px;color:#eee;font-weight:bold;letter-spacing:0.15px;">Tags</div>
<div class="a t" style="left:1455.3px;top:320.35px;font-size:14px;line-height:14px;color:#eee;font-weight:bold;">Info</div>
<div class="a" style="left:10px;top:362px;width:1878px;height:34px;background:#595959;"></div>
<div class="a" style="left:10px;top:366px;width:27px;height:26px;background:#28a745;border-radius:4px"></div>
<svg class="a" style="left:18px;top:373px" width="11" height="11"><path d="M5.5 1 V10 M1 5.5 H10" stroke="#eee" stroke-width="2"/></svg>
<div class="a t" style="left:43px;top:368.50px;font-size:13px;line-height:13px;color:#eee;">tcp</div>
<div class="a t" style="left:97.5px;top:364.74px;font-size:12px;line-height:12px;color:#eee;letter-spacing:0.35px;">http</div>
<div class="a t" style="left:127.9px;top:364.74px;font-size:12px;line-height:12px;color:#eee;letter-spacing:0.35px;">tcp</div>
<div class="a t" style="left:297.6px;top:364.74px;font-size:12px;line-height:12px;color:#eee;letter-spacing:0.35px;">2009/11/25</div>
<div class="a t" style="left:297.6px;top:380.74px;font-size:12px;line-height:12px;color:#eee;letter-spacing:0.35px;">06:15:38 MST</div>
<div class="a t" style="left:397.7px;top:364.74px;font-size:12px;line-height:12px;color:#eee;letter-spacing:0.35px;">2009/11/25</div>
<div class="a t" style="left:397.7px;top:380.74px;font-size:12px;line-height:12px;color:#eee;letter-spacing:0.35px;">06:15:38 MST</div>
<div class="a t" style="left:497.4px;top:364.74px;font-size:12px;line-height:12px;color:#eee;letter-spacing:0.35px;">192.168.1.103</div>
<div class="a t" style="left:637.2px;top:364.74px;font-size:12px;line-height:12px;color:#eee;letter-spacing:0.35px;">1263</div>
<div class="a t" style="left:737.4px;top:364.74px;font-size:12px;line-height:12px;color:#eee;letter-spacing:0.35px;">198.189.255.89</div>
<div class="a t" style="left:737.4px;top:379.74px;font-size:12px;line-height:12px;color:#eee;letter-spacing:0.35px;">US</div>
<div class="a t" style="left:877.5px;top:364.74px;font-size:12px;line-height:12px;color:#eee;letter-spacing:0.35px;">80</div>
<div class="a t" style="left:977.6px;top:364.74px;font-size:12px;line-height:12px;color:#eee;letter-spacing:0.35px;">33</div>
<div class="a t" style="left:1077.2px;top:364.74px;font-size:12px;line-height:12px;color:#eee;letter-spacing:0.35px;">28,482</div>
<div class="a t" style="left:1077.2px;top:379.84px;font-size:12px;line-height:12px;color:#eee;letter-spacing:0.35px;">30,358</div>
<div class="a t" style="left:1197.4px;top:364.74px;font-size:12px;line-height:12px;color:#eee;letter-spacing:0.35px;">scenario</div>
<div class="a t" style="left:1255px;top:364.74px;font-size:12px;line-height:12px;color:#eee;letter-spacing:0.35px;">net</div>
<div class="a t" style="left:1282.2px;top:364.74px;font-size:12px;line-height:12px;color:#eee;letter-spacing:0.35px;">M57 Patents</div>
<div class="a" style="left:1453px;top:363px;width:41px;height:20px;border:1px solid #ccc;border-radius:4px;background:#222"></div>
<div class="a t" style="left:1458.2px;top:366.84px;font-size:12px;line-height:12px;color:#eee;">URI</div>
<svg class="a" style="left:1482px;top:371px" width="7" height="4"><path d="M0 0 H7 L3.5 4Z" fill="#eee"/></svg>
<div class="a t" style="left:1500.7px;top:366.84px;font-size:12px;line-height:12px;color:#eee;letter-spacing:0.35px;">aa.avg.com/softw/90/update/u7iavi2525u252475.bin</div>
<div class="a" style="left:10px;top:396px;width:1878px;height:34px;background:#222;"></div>
<div class="a" style="left:10px;top:400px;width:27px;height:26px;background:#28a745;border-radius:4px"></div>
<svg class="a" style="left:18px;top:407px" width="11" height="11"><path d="M5.5 1 V10 M1 5.5 H10" stroke="#eee" stroke-width="2"/></svg>
<div class="a t" style="left:43px;top:402.50px;font-size:13px;line-height:13px;color:#eee;">tcp</div>
<div class="a t" style="left:97.5px;top:398.74px;font-size:12px;line-height:12px;color:#eee;letter-spacing:0.35px;">http</div>
<div class="a t" style="left:127.9px;top:398.74px;font-size:12px;line-height:12px;color:#eee;letter-spacing:0.35px;">tcp</div>
<div class="a t" style="left:297.6px;top:398.74px;font-size:12px;line-height:12px;color:#eee;letter-spacing:0.35px;">2009/11/25</div>
<div class="a t" style="left:297.6px;top:414.74px;font-size:12px;line-height:12px;color:#eee;letter-spacing:0.35px;">06:15:37 MST</div>
<div class="a t" style="left:397.7px;top:398.74px;font-size:12px;line-height:12px;color:#eee;letter-spacing:0.35px;">2009/11/25</div>
<div class="a t" style="left:397.7px;top:414.74px;font-size:12px;line-height:12px;color:#eee;letter-spacing:0.35px;">06:15:37 MST</div>
<div class="a t" style="left:497.4px;top:398.74px;font-size:12px;line-height:12px;color:#eee;letter-spacing:0.35px;">192.168.1.103</div>
<div class="a t" style="left:637.2px;top:398.74px;font-size:12px;line-height:12px;color:#eee;letter-spacing:0.35px;">1261</div>
<div class="a t" style="left:737.4px;top:398.74px;font-size:12px;line-height:12px;color:#eee;letter-spacing:0.35px;">198.189.255.89</div>
<div class="a t" style="left:737.4px;top:413.74px;font-size:12px;line-height:12px;color:#eee;letter-spacing:0.35px;">US</div>
<div class="a t" style="left:877.5px;top:398.74px;font-size:12px;line-height:12px;color:#eee;letter-spacing:0.35px;">80</div>
<div class="a t" style="left:977.6px;top:398.74px;font-size:12px;line-height:12px;color:#eee;letter-spacing:0.35px;">106</div>
<div class="a t" style="left:1077.2px;top:398.74px;font-size:12px;line-height:12px;color:#eee;letter-spacing:0.35px;">106,451</div>
<div class="a t" style="left:1077.2px;top:413.84px;font-size:12px;line-height:12px;color:#eee;letter-spacing:0.35px;">112,439</div>
<div class="a t" style="left:1197.4px;top:398.74px;font-size:12px;line-height:12px;color:#eee;letter-spacing:0.35px;">scenario</div>
<div class="a t" style="left:1255px;top:398.74px;font-size:12px;line-height:12px;color:#eee;letter-spacing:0.35px;">net</div>
<div class="a t" style="left:1282.2px;top:398.74px;font-size:12px;line-height:12px;color:#eee;letter-spacing:0.35px;">M57 Patents</div>
<div class="a" style="left:1453px;top:397px;width:41px;height:20px;border:1px solid #ccc;border-radius:4px;background:#222"></div>
<div class="a t" style="left:1458.2px;top:400.84px;font-size:12px;line-height:12px;color:#eee;">URI</div>
<svg class="a" style="left:1482px;top:405px" width="7" height="4"><path d="M0 0 H7 L3.5 4Z" fill="#eee"/></svg>
<div class="a t" style="left:1500.7px;top:400.84px;font-size:12px;line-height:12px;color:#eee;letter-spacing:0.35px;">aa.avg.com/softw/90/update/u7avi1787u170575.bin</div>
<div class="a" style="left:10px;top:430px;width:1878px;height:34px;background:#595959;"></div>
<div class="a" style="left:10px;top:434px;width:27px;height:26px;background:#28a745;border-radius:4px"></div>
<svg class="a" style="left:18px;top:441px" width="11" height="11"><path d="M5.5 1 V10 M1 5.5 H10" stroke="#eee" stroke-width="2"/></svg>
<div class="a t" style="left:43px;top:436.50px;font-size:13px;line-height:13px;color:#eee;">tcp</div>
<div class="a t" style="left:97.5px;top:432.74px;font-size:12px;line-height:12px;color:#eee;letter-spacing:0.35px;">http</div>
<div class="a t" style="left:127.9px;top:432.74px;font-size:12px;line-height:12px;color:#eee;letter-spacing:0.35px;">tcp</div>
<div class="a t" style="left:297.6px;top:432.74px;font-size:12px;line-height:12px;color:#eee;letter-spacing:0.35px;">2009/11/25</div>
<div class="a t" style="left:297.6px;top:448.74px;font-size:12px;line-height:12px;color:#eee;letter-spacing:0.35px;">06:02:51 MST</div>
<div class="a t" style="left:397.7px;top:432.74px;font-size:12px;line-height:12px;color:#eee;letter-spacing:0.35px;">2009/11/25</div>
<div class="a t" style="left:397.7px;top:448.74px;font-size:12px;line-height:12px;color:#eee;letter-spacing:0.35px;">06:02:51 MST</div>
<div class="a t" style="left:497.4px;top:432.74px;font-size:12px;line-height:12px;color:#eee;letter-spacing:0.35px;">192.168.1.106</div>
<div class="a t" style="left:637.2px;top:432.74px;font-size:12px;line-height:12px;color:#eee;letter-spacing:0.35px;">1252</div>
<div class="a t" style="left:737.4px;top:432.74px;font-size:12px;line-height:12px;color:#eee;letter-spacing:0.35px;">198.189.255.89</div>
<div class="a t" style="left:737.4px;top:447.74px;font-size:12px;line-height:12px;color:#eee;letter-spacing:0.35px;">US</div>
<div class="a t" style="left:877.5px;top:432.74px;font-size:12px;line-height:12px;color:#eee;letter-spacing:0.35px;">80</div>
<div class="a t" style="left:977.6px;top:432.74px;font-size:12px;line-height:12px;color:#eee;letter-spacing:0.35px;">33</div>
<div class="a t" style="left:1077.2px;top:432.74px;font-size:12px;line-height:12px;color:#eee;letter-spacing:0.35px;">28,487</div>
<div class="a t" style="left:1077.2px;top:447.84px;font-size:12px;line-height:12px;color:#eee;letter-spacing:0.35px;">30,363</div>
<div class="a t" style="left:1197.4px;top:432.74px;font-size:12px;line-height:12px;color:#eee;letter-spacing:0.35px;">scenario</div>
<div class="a t" style="left:1255px;top:432.74px;font-size:12px;line-height:12px;color:#eee;letter-spacing:0.35px;">net</div>
<div class="a t" style="left:1282.2px;top:432.74px;font-size:12px;line-height:12px;color:#eee;letter-spacing:0.35px;">M57 Patents</div>
<div class="a" style="left:1453px;top:431px;width:41px;height:20px;border:1px solid #ccc;border-radius:4px;background:#222"></div>
<div class="a t" style="left:1458.2px;top:434.84px;font-size:12px;line-height:12px;color:#eee;">URI</div>
<svg class="a" style="left:1482px;top:439px" width="7" height="4"><path d="M0 0 H7 L3.5 4Z" fill="#eee"/></svg>
<div class="a t" style="left:1500.7px;top:434.84px;font-size:12px;line-height:12px;color:#eee;letter-spacing:0.35px;">aa.avg.com/softw/90/update/u7iavi2525u252475.bin</div>
<div class="a" style="left:10px;top:464px;width:1878px;height:34px;background:#222;"></div>
<div class="a" style="left:10px;top:468px;width:27px;height:26px;background:#28a745;border-radius:4px"></div>
<svg class="a" style="left:18px;top:475px" width="11" height="11"><path d="M5.5 1 V10 M1 5.5 H10" stroke="#eee" stroke-width="2"/></svg>
<div class="a t" style="left:43px;top:470.50px;font-size:13px;line-height:13px;color:#eee;">tcp</div>
<div class="a t" style="left:97.5px;top:466.74px;font-size:12px;line-height:12px;color:#eee;letter-spacing:0.35px;">http</div>
<div class="a t" style="left:127.9px;top:466.74px;font-size:12px;line-height:12px;color:#eee;letter-spacing:0.35px;">tcp</div>
<div class="a t" style="left:297.6px;top:466.74px;font-size:12px;line-height:12px;color:#eee;letter-spacing:0.35px;">2009/11/25</div>
<div class="a t" style="left:297.6px;top:482.74px;font-size:12px;line-height:12px;color:#eee;letter-spacing:0.35px;">06:02:51 MST</div>
<div class="a t" style="left:397.7px;top:466.74px;font-size:12px;line-height:12px;color:#eee;letter-spacing:0.35px;">2009/11/25</div>
<div class="a t" style="left:397.7px;top:482.74px;font-size:12px;line-height:12px;color:#eee;letter-spacing:0.35px;">06:02:51 MST</div>
<div class="a t" style="left:497.4px;top:466.74px;font-size:12px;line-height:12px;color:#eee;letter-spacing:0.35px;">192.168.1.106</div>
<div class="a t" style="left:637.2px;top:466.74px;font-size:12px;line-height:12px;color:#eee;letter-spacing:0.35px;">1250</div>
<div class="a t" style="left:737.4px;top:466.74px;font-size:12px;line-height:12px;color:#eee;letter-spacing:0.35px;">198.189.255.89</div>
<div class="a t" style="left:737.4px;top:481.74px;font-size:12px;line-height:12px;color:#eee;letter-spacing:0.35px;">US</div>
<div class="a t" style="left:877.5px;top:466.74px;font-size:12px;line-height:12px;color:#eee;letter-spacing:0.35px;">80</div>
<div class="a t" style="left:977.6px;top:466.74px;font-size:12px;line-height:12px;color:#eee;letter-spacing:0.35px;">104</div>
<div class="a t" style="left:1077.2px;top:466.74px;font-size:12px;line-height:12px;color:#eee;letter-spacing:0.35px;">106,456</div>
<div class="a t" style="left:1077.2px;top:481.84px;font-size:12px;line-height:12px;color:#eee;letter-spacing:0.35px;">112,316</div>
<div class="a t" style="left:1197.4px;top:466.74px;font-size:12px;line-height:12px;color:#eee;letter-spacing:0.35px;">scenario</div>
<div class="a t" style="left:1255px;top:466.74px;font-size:12px;line-height:12px;color:#eee;letter-spacing:0.35px;">net</div>
<div class="a t" style="left:1282.2px;top:466.74px;font-size:12px;line-height:12px;color:#eee;letter-spacing:0.35px;">M57 Patents</div>
<div class="a" style="left:1453px;top:465px;width:41px;height:20px;border:1px solid #ccc;border-radius:4px;background:#222"></div>
<div class="a t" style="left:1458.2px;top:468.84px;font-size:12px;line-height:12px;color:#eee;">URI</div>
<svg class="a" style="left:1482px;top:473px" width="7" height="4"><path d="M0 0 H7 L3.5 4Z" fill="#eee"/></svg>
<div class="a t" style="left:1500.7px;top:468.84px;font-size:12px;line-height:12px;color:#eee;letter-spacing:0.35px;">aa.avg.com/softw/90/update/u7avi1787u170575.bin</div>
<div class="a" style="left:10px;top:498px;width:1878px;height:34px;background:#595959;"></div>
<div class="a" style="left:10px;top:502px;width:27px;height:26px;background:#28a745;border-radius:4px"></div>
<svg class="a" style="left:18px;top:509px" width="11" height="11"><path d="M5.5 1 V10 M1 5.5 H10" stroke="#eee" stroke-width="2"/></svg>
<div class="a t" style="left:43px;top:504.50px;font-size:13px;line-height:13px;color:#eee;">tcp</div>
<div class="a t" style="left:97.5px;top:500.74px;font-size:12px;line-height:12px;color:#eee;letter-spacing:0.35px;">http</div>
<div class="a t" style="left:127.9px;top:500.74px;font-size:12px;line-height:12px;color:#eee;letter-spacing:0.35px;">tcp</div>
<div class="a t" style="left:297.6px;top:500.74px;font-size:12px;line-height:12px;color:#eee;letter-spacing:0.35px;">2009/11/25</div>
<div class="a t" style="left:297.6px;top:516.74px;font-size:12px;line-height:12px;color:#eee;letter-spacing:0.35px;">04:36:23 MST</div>
<div class="a t" style="left:397.7px;top:500.74px;font-size:12px;line-height:12px;color:#eee;letter-spacing:0.35px;">2009/11/25</div>
<div class="a t" style="left:397.7px;top:516.74px;font-size:12px;line-height:12px;color:#eee;letter-spacing:0.35px;">04:36:23 MST</div>
<div class="a t" style="left:497.4px;top:500.74px;font-size:12px;line-height:12px;color:#eee;letter-spacing:0.35px;">192.168.1.104</div>
<div class="a t" style="left:637.2px;top:500.74px;font-size:12px;line-height:12px;color:#eee;letter-spacing:0.35px;">1072</div>
<div class="a t" style="left:737.4px;top:500.74px;font-size:12px;line-height:12px;color:#eee;letter-spacing:0.35px;">198.189.255.75</div>
<div class="a t" style="left:737.4px;top:515.74px;font-size:12px;line-height:12px;color:#eee;letter-spacing:0.35px;">US</div>
<div class="a t" style="left:877.5px;top:500.74px;font-size:12px;line-height:12px;color:#eee;letter-spacing:0.35px;">80</div>
<div class="a t" style="left:977.6px;top:500.74px;font-size:12px;line-height:12px;color:#eee;letter-spacing:0.35px;">34</div>
<div class="a t" style="left:1077.2px;top:500.74px;font-size:12px;line-height:12px;color:#eee;letter-spacing:0.35px;">28,487</div>
<div class="a t" style="left:1077.2px;top:515.84px;font-size:12px;line-height:12px;color:#eee;letter-spacing:0.35px;">30,427</div>
<div class="a t" style="left:1197.4px;top:500.74px;font-size:12px;line-height:12px;color:#eee;letter-spacing:0.35px;">scenario</div>
<div class="a t" style="left:1255px;top:500.74px;font-size:12px;line-height:12px;color:#eee;letter-spacing:0.35px;">net</div>
<div class="a t" style="left:1282.2px;top:500.74px;font-size:12px;line-height:12px;color:#eee;letter-spacing:0.35px;">M57 Patents</div>
<div class="a" style="left:1453px;top:499px;width:41px;height:20px;border:1px solid #ccc;border-radius:4px;background:#222"></div>
<div class="a t" style="left:1458.2px;top:502.84px;font-size:12px;line-height:12px;color:#eee;">URI</div>
<svg class="a" style="left:1482px;top:507px" width="7" height="4"><path d="M0 0 H7 L3.5 4Z" fill="#eee"/></svg>
<div class="a t" style="left:1500.7px;top:502.84px;font-size:12px;line-height:12px;color:#eee;letter-spacing:0.35px;">aa.avg.com/softw/90/update/u7iavi2525u252475.bin</div>
<div class="a" style="left:10px;top:532px;width:1878px;height:36px;background:#222;"></div>
<div class="a" style="left:10px;top:536px;width:27px;height:26px;background:#28a745;border-radius:4px"></div>
<svg class="a" style="left:18px;top:543px" width="11" height="11"><path d="M5.5 1 V10 M1 5.5 H10" stroke="#eee" stroke-width="2"/></svg>
<div class="a t" style="left:43px;top:538.50px;font-size:13px;line-height:13px;color:#eee;">tcp</div>
<div class="a t" style="left:97.5px;top:534.74px;font-size:12px;line-height:12px;color:#eee;letter-spacing:0.35px;">http</div>
<div class="a t" style="left:127.9px;top:534.74px;font-size:12px;line-height:12px;color:#eee;letter-spacing:0.35px;">tcp</div>
<div class="a t" style="left:297.6px;top:534.74px;font-size:12px;line-height:12px;color:#eee;letter-spacing:0.35px;">2009/11/25</div>
<div class="a t" style="left:297.6px;top:550.74px;font-size:12px;line-height:12px;color:#eee;letter-spacing:0.35px;">04:36:22 MST</div>
<div class="a t" style="left:397.7px;top:534.74px;font-size:12px;line-height:12px;color:#eee;letter-spacing:0.35px;">2009/11/25</div>
<div class="a t" style="left:397.7px;top:550.74px;font-size:12px;line-height:12px;color:#eee;letter-spacing:0.35px;">04:36:23 MST</div>
<div class="a t" style="left:497.4px;top:534.74px;font-size:12px;line-height:12px;color:#eee;letter-spacing:0.35px;">192.168.1.104</div>
<div class="a t" style="left:637.2px;top:534.74px;font-size:12px;line-height:12px;color:#eee;letter-spacing:0.35px;">1070</div>
<div class="a t" style="left:737.4px;top:534.74px;font-size:12px;line-height:12px;color:#eee;letter-spacing:0.35px;">198.189.255.75</div>
<div class="a t" style="left:737.4px;top:549.74px;font-size:12px;line-height:12px;color:#eee;letter-spacing:0.35px;">US</div>
<div class="a t" style="left:877.5px;top:534.74px;font-size:12px;line-height:12px;color:#eee;letter-spacing:0.35px;">80</div>
<div class="a t" style="left:977.6px;top:534.74px;font-size:12px;line-height:12px;color:#eee;letter-spacing:0.35px;">106</div>
<div class="a t" style="left:1077.2px;top:534.74px;font-size:12px;line-height:12px;color:#eee;letter-spacing:0.35px;">106,456</div>
<div class="a t" style="left:1077.2px;top:549.84px;font-size:12px;line-height:12px;color:#eee;letter-spacing:0.35px;">112,456</div>
<div class="a t" style="left:1197.4px;top:534.74px;font-size:12px;line-height:12px;color:#eee;letter-spacing:0.35px;">scenario</div>
<div class="a t" style="left:1255px;top:534.74px;font-size:12px;line-height:12px;color:#eee;letter-spacing:0.35px;">net</div>
<div class="a t" style="left:1282.2px;top:534.74px;font-size:12px;line-height:12px;color:#eee;letter-spacing:0.35px;">M57 Patents</div>
<div class="a t" style="left:1197.4px;top:552.64px;font-size:12px;line-height:12px;color:#eee;letter-spacing:0.35px;">out-of-order-dst</div>
<div class="a" style="left:1453px;top:533px;width:41px;height:20px;border:1px solid #ccc;border-radius:4px;background:#222"></div>
<div class="a t" style="left:1458.2px;top:536.84px;font-size:12px;line-height:12px;color:#eee;">URI</div>
<svg class="a" style="left:1482px;top:541px" width="7" height="4"><path d="M0 0 H7 L3.5 4Z" fill="#eee"/></svg>
<div class="a t" style="left:1500.7px;top:536.84px;font-size:12px;line-height:12px;color:#eee;letter-spacing:0.35px;">aa.avg.com/softw/90/update/u7avi1787u170575.bin</div>
<div class="a" style="left:10px;top:568px;width:1878px;height:34px;background:#595959;"></div>
<div class="a" style="left:10px;top:572px;width:27px;height:26px;background:#28a745;border-radius:4px"></div>
<svg class="a" style="left:18px;top:579px" width="11" height="11"><path d="M5.5 1 V10 M1 5.5 H10" stroke="#eee" stroke-width="2"/></svg>
<div class="a t" style="left:43px;top:574.50px;font-size:13px;line-height:13px;color:#eee;">tcp</div>
<div class="a t" style="left:97.5px;top:570.74px;font-size:12px;line-height:12px;color:#eee;letter-spacing:0.35px;">http</div>
<div class="a t" style="left:127.9px;top:570.74px;font-size:12px;line-height:12px;color:#eee;letter-spacing:0.35px;">tcp</div>
<div class="a t" style="left:297.6px;top:570.74px;font-size:12px;line-height:12px;color:#eee;letter-spacing:0.35px;">2009/11/25</div>
<div class="a t" style="left:297.6px;top:586.74px;font-size:12px;line-height:12px;color:#eee;letter-spacing:0.35px;">04:36:22 MST</div>
<div class="a t" style="left:397.7px;top:570.74px;font-size:12px;line-height:12px;color:#eee;letter-spacing:0.35px;">2009/11/25</div>
<div class="a t" style="left:397.7px;top:586.74px;font-size:12px;line-height:12px;color:#eee;letter-spacing:0.35px;">04:36:22 MST</div>
<div class="a t" style="left:497.4px;top:570.74px;font-size:12px;line-height:12px;color:#eee;letter-spacing:0.35px;">192.168.1.104</div>
<div class="a t" style="left:637.2px;top:570.74px;font-size:12px;line-height:12px;color:#eee;letter-spacing:0.35px;">1058</div>
<div class="a t" style="left:737.4px;top:570.74px;font-size:12px;line-height:12px;color:#eee;letter-spacing:0.35px;">198.189.255.75</div>
<div class="a t" style="left:737.4px;top:585.74px;font-size:12px;line-height:12px;color:#eee;letter-spacing:0.35px;">US</div>
<div class="a t" style="left:877.5px;top:570.74px;font-size:12px;line-height:12px;color:#eee;letter-spacing:0.35px;">80</div>
<div class="a t" style="left:977.6px;top:570.74px;font-size:12px;line-height:12px;color:#eee;letter-spacing:0.35px;">11</div>
<div class="a t" style="left:1077.2px;top:570.74px;font-size:12px;line-height:12px;color:#eee;letter-spacing:0.35px;">3,605</div>
<div class="a t" style="left:1077.2px;top:585.84px;font-size:12px;line-height:12px;color:#eee;letter-spacing:0.35px;">3,605</div>
<div class="a t" style="left:1197.4px;top:570.74px;font-size:12px;line-height:12px;color:#eee;letter-spacing:0.35px;">scenario</div>
<div class="a t" style="left:1255px;top:570.74px;font-size:12px;line-height:12px;color:#eee;letter-spacing:0.35px;">net</div>
<div class="a t" style="left:1282.2px;top:570.74px;font-size:12px;line-height:12px;color:#eee;letter-spacing:0.35px;">M57 Patents</div>
<div class="a" style="left:1453px;top:569px;width:41px;height:20px;border:1px solid #ccc;border-radius:4px;background:#222"></div>
<div class="a t" style="left:1458.2px;top:572.84px;font-size:12px;line-height:12px;color:#eee;">URI</div>
<svg class="a" style="left:1482px;top:577px" width="7" height="4"><path d="M0 0 H7 L3.5 4Z" fill="#eee"/></svg>
<div class="a t" style="left:1500.7px;top:572.84px;font-size:12px;line-height:12px;color:#eee;letter-spacing:0.35px;">javadl-esd.sun.com/update/1.6.0/map-1.6.0.xml</div>
<div class="a" style="left:93px;top:80px;width:305px;height:29px;background:rgba(0,0,0,.9);border-radius:4px"></div>
<svg class="a" style="left:240px;top:109px" width="12" height="6"><path d="M0 0 H12 L6 6Z" fill="rgba(0,0,0,.9)"/></svg>
<div class="a t" style="left:101px;top:88.05px;font-size:14px;line-height:14px;color:#fff;letter-spacing:0.1px;">Apply action to 7075 query matching sessions</div>
<div class="a" style="left:0px;top:0px;width:2px;height:580px;background:#4a4a4a;z-index:99"></div>
</body></html>
